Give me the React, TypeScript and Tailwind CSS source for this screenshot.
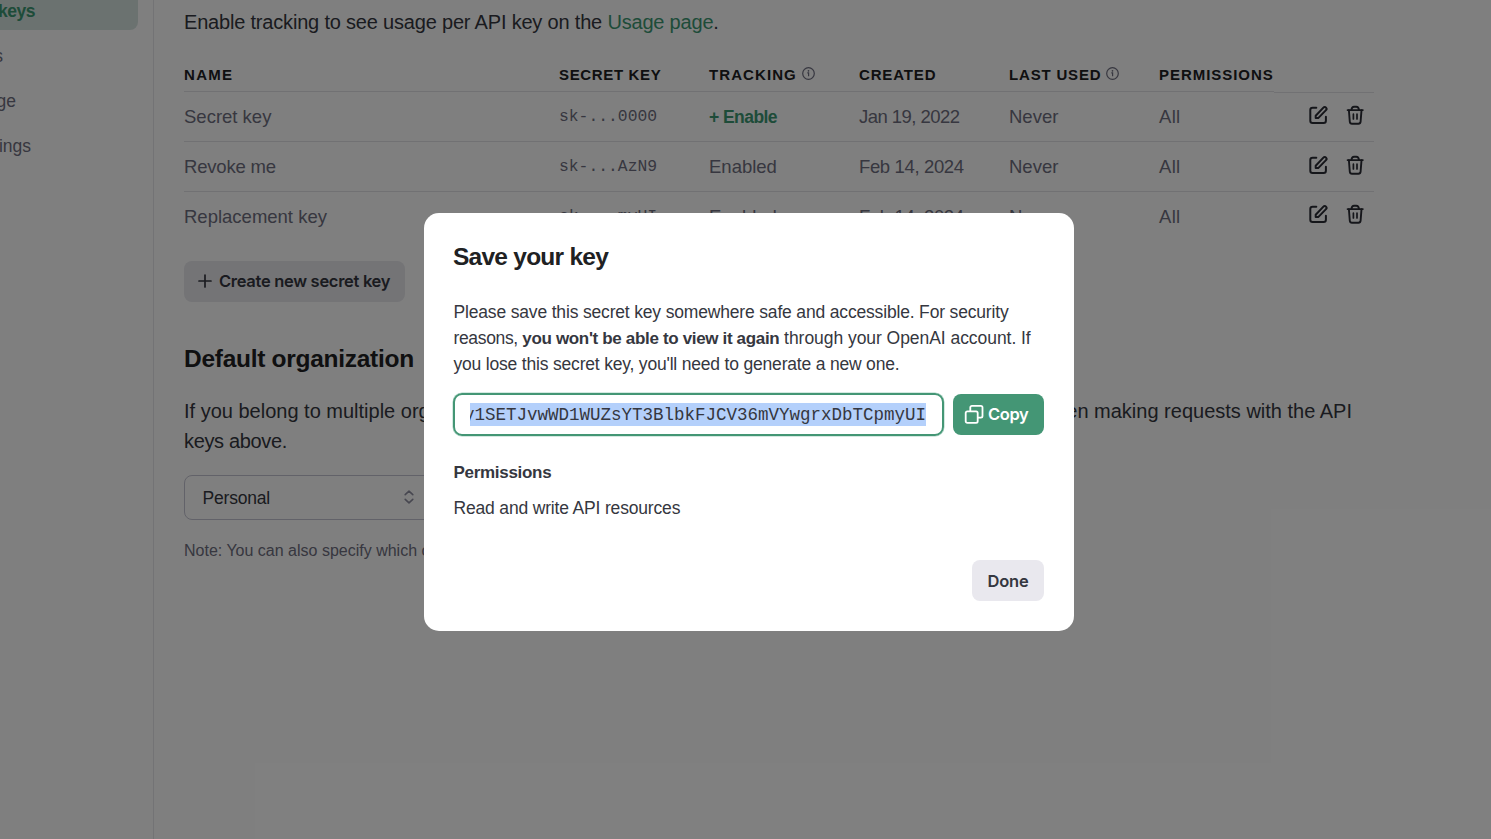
import type { ReactNode } from "react";

function EditIcon() {
  return (
    <svg width="24" height="24" viewBox="0 0 24 24" fill="none" stroke="currentColor" strokeWidth="2" strokeLinecap="round" strokeLinejoin="round">
      <path d="M10.3 5.7H6.6a2.3 2.3 0 0 0-2.3 2.3v10.7a2.3 2.3 0 0 0 2.3 2.3h11a2.3 2.3 0 0 0 2.3-2.3v-4" />
      <path d="M9.7 16.1v-2.3l7.7-8.2a1.8 1.8 0 0 1 2.6 0a1.8 1.8 0 0 1 0 2.5L12.2 16.1z" />
    </svg>
  );
}

function TrashIcon() {
  return (
    <svg width="24" height="24" viewBox="0 0 24 24" fill="none" stroke="currentColor" strokeWidth="1.9" strokeLinecap="round" strokeLinejoin="round">
      <path d="M4.6 8.1h15.2" />
      <path d="M8.4 8c.3-2 1.3-3.2 2.6-3.2h2.4c1.3 0 2.3 1.2 2.6 3.2" />
      <path d="M5.9 8.2l.9 11.5a2.2 2.2 0 0 0 2.2 2h6.4a2.2 2.2 0 0 0 2.2-2l.9-11.5" />
      <path d="M10.4 12.2v4.7M14 12.2v4.7" strokeWidth="1.7" />
    </svg>
  );
}

function InfoIcon() {
  return (
    <svg width="13" height="13" viewBox="0 0 13 13" fill="none" stroke="currentColor">
      <circle cx="6.5" cy="6.5" r="5.8" strokeWidth="1.2" />
      <path d="M5.3 5.8h1.3v3.4" strokeWidth="1.2" />
      <circle cx="6.5" cy="3.8" r=".85" fill="currentColor" stroke="none" />
    </svg>
  );
}

function CopyIcon() {
  return (
    <svg width="20" height="20" viewBox="0 0 20 20" fill="none" stroke="currentColor" strokeWidth="1.8" strokeLinejoin="round">
      <rect x="1.7" y="7.3" width="12" height="11.5" rx="1.6" />
      <path d="M6.3 7V3.4a1.6 1.6 0 0 1 1.6-1.6h9a1.6 1.6 0 0 1 1.6 1.6v8.7a1.6 1.6 0 0 1-1.6 1.6H14" />
    </svg>
  );
}

function SidebarItem({ label, width, active = false }: { label: string; width: string; active?: boolean }) {
  return (
    <div className={active ? "flex h-[37px] w-[138px] items-center rounded-r-[8px] bg-[#d7e5e1]" : "flex h-[37px] w-[138px] items-center"}>
      <span className={`${width} flex shrink-0 justify-end whitespace-nowrap ${active ? "font-bold tracking-[-0.5px] text-[#3c9873]" : "text-[#6e6e80]"}`}>
        {label}
      </span>
    </div>
  );
}

function HeaderCell({ children, info = false }: { children?: ReactNode; info?: boolean }) {
  return (
    <div className="flex h-[34px] gap-[5px] whitespace-nowrap border-b border-[#e2e2e6] pt-[7px] leading-[20px]">
      {children}
      {info && <span className="pt-[2px] text-[#6e6e80]"><InfoIcon /></span>}
    </div>
  );
}

const keys = [
  { name: "Secret key", secret: "sk-...0000", tracked: false, created: "Jan 19, 2022" },
  { name: "Revoke me", secret: "sk-...AzN9", tracked: true, created: "Feb 14, 2024" },
  { name: "Replacement key", secret: "sk-...myUI", tracked: true, created: "Feb 14, 2024" },
];

const columns = "grid grid-cols-[375px_150px_150px_150px_150px_115px_100px]";

export default function App() {
  return (
    <div className="relative h-[839px] w-[1491px] overflow-hidden bg-white font-['Liberation_Sans',Arial,sans-serif] text-[#353740]">
      <div className="flex h-full">
        <aside className="-mt-[7px] flex w-[154px] shrink-0 flex-col gap-[8px] border-r border-[#e6e6ea] text-[17.5px]">
          <SidebarItem label="API keys" width="w-[35px]" active />
          <SidebarItem label="Files" width="w-[3px]" />
          <SidebarItem label="Usage" width="w-[16px]" />
          <SidebarItem label="Settings" width="w-[31px]" />
        </aside>

        <main className="w-[1220px] shrink-0 pl-[30px] pt-[7px]">
          <p className="h-[51px] whitespace-nowrap text-[20px] leading-[30px] tracking-[-0.19px]">
            Enable tracking to see usage per API key on the <span className="text-[#3c9873]">Usage page</span>.
          </p>

          <div className={`${columns} h-[34px] text-[15px] font-bold text-[#202123]`}>
            <HeaderCell><span className="tracking-[1.3px]">NAME</span></HeaderCell>
            <HeaderCell><span className="tracking-[0.65px]">SECRET KEY</span></HeaderCell>
            <HeaderCell info><span className="tracking-[1.08px]">TRACKING</span></HeaderCell>
            <HeaderCell><span className="tracking-[0.85px]">CREATED</span></HeaderCell>
            <HeaderCell info><span className="tracking-[0.82px]">LAST USED</span></HeaderCell>
            <HeaderCell><span className="tracking-[0.95px]">PERMISSIONS</span></HeaderCell>
            <div className="h-[35px] border-b border-[#e2e2e6]" />
          </div>

          {keys.map((k, i) => (
            <div
              key={k.name}
              className={`${columns} items-center whitespace-nowrap text-[18.5px] text-[#6e6e80] ${i < 2 ? "h-[50px] border-b border-[#e2e2e6]" : "h-[49px]"}`}
            >
              <span className={k.name === "Revoke me" ? "tracking-[-0.2px]" : ""}>{k.name}</span>
              <span className="pt-[2px] font-['Liberation_Mono',monospace] text-[16.35px]">{k.secret}</span>
              {k.tracked ? (
                <span>Enabled</span>
              ) : (
                <span className="pt-[2px] text-[17.5px] font-bold tracking-[-0.56px] text-[#3c9873]">+ Enable</span>
              )}
              <span className={k.tracked ? "tracking-[-0.36px]" : "tracking-[-0.55px]"}>{k.created}</span>
              <span>Never</span>
              <span className="tracking-[0.3px]">All</span>
              <span className={`flex gap-[13px] pl-[32px] text-[#2b2c35] ${i < 2 ? "pb-[5px]" : "pb-[7px]"}`}>
                <EditIcon />
                <TrashIcon />
              </span>
            </div>
          ))}

          <button className="mt-[20px] flex h-[41px] w-[221px] items-center gap-[7px] whitespace-nowrap rounded-[8px] bg-[#e8e8ed] pl-[14px] font-['Inter',sans-serif] text-[16.5px] font-semibold tracking-[-0.3px] text-[#353740]">
            <svg width="14" height="14" viewBox="0 0 14 14" stroke="currentColor" strokeWidth="1.7" strokeLinecap="round" className="mb-[1px]">
              <path d="M7 1v12M1 7h12" />
            </svg>
            Create new secret key
          </button>

          <h2 className="mt-[41px] text-[24.5px] font-bold leading-[32px] tracking-[-0.28px] text-[#202123]">Default organization</h2>

          <div className="mt-[21px] text-[20px] leading-[30px]">
            <div className="flex w-[1168px] justify-between whitespace-nowrap">
              <span>If you belong to multiple organizations, this controls which</span>
              <span>is used by default when making requests with the API</span>
            </div>
            <div className="tracking-[-0.34px]">keys above.</div>
          </div>

          <div className="mt-[19px] flex h-[45px] w-[250px] items-center justify-between rounded-[8px] border border-[#c5c5d2] pl-[17.5px] pr-[19px] text-[17.5px] tracking-[-0.2px]">
            <span className="pt-[2px]">Personal</span>
            <svg width="10" height="14" viewBox="0 0 10 14" fill="none" stroke="#8e8ea0" strokeWidth="1.6" strokeLinecap="round" strokeLinejoin="round" className="mb-[2px]">
              <path d="M1.2 4.6L5 1.2l3.8 3.4M1.2 9.4L5 12.8l3.8-3.4" />
            </svg>
          </div>

          <p className="mt-[20px] whitespace-nowrap text-[16px] leading-[22px] text-[#6e6e80]">
            Note: You can also specify which organization to use for each API request.
          </p>
        </main>
      </div>

      <div className="absolute inset-0 flex items-start justify-center bg-black/50 pl-[7px] pt-[213px]">
        <div className="flex h-[418px] w-[650px] flex-col rounded-[15px] bg-white px-[30px] pt-[28px]">
          <h3 className="-ml-px text-[24.5px] font-bold leading-[32px] tracking-[-0.75px] text-[#202123]">Save your key</h3>

          <div className="-ml-[0.5px] mt-[26px] whitespace-nowrap text-[17.5px] leading-[26px]">
            <p className="tracking-[-0.17px]">Please save this secret key somewhere safe and accessible. For security</p>
            <p className="h-[26px] tracking-[-0.05px]">
              <span className="tracking-[-0.35px]">reasons, </span>
              <strong className="text-[17px] font-bold leading-none tracking-[-0.34px]">you won't be able to view it again</strong> through your OpenAI account. If
            </p>
            <p className="tracking-[-0.19px]">you lose this secret key, you'll need to generate a new one.</p>
          </div>

          <div className="-ml-px mt-[16px] flex items-center gap-[9px]">
            <div className="flex h-[43px] w-[491px] items-center rounded-[9px] border-2 border-[#449675] px-[15px] shadow-[0_0_0_0.5px_#a9d3c3]">
              <div className="flex h-[23px] w-[456px] items-center justify-end overflow-hidden whitespace-nowrap bg-[#b4d0fb] font-['Liberation_Mono',monospace] text-[17.5px]">
                <span className="pt-[2px]">y1SETJvwWD1WUZsYT3BlbkFJCV36mVYwgrxDbTCpmyUI</span>
              </div>
            </div>
            <button className="flex h-[41px] w-[91px] items-center gap-[4px] rounded-[8px] bg-[#449675] pl-[11px] font-['Inter',sans-serif] text-[16.5px] font-semibold tracking-[-0.4px] text-white">
              <span className="pb-[2px]"><CopyIcon /></span>
              Copy
            </button>
          </div>

          <h4 className="-ml-[0.5px] mt-[24px] text-[17px] font-bold leading-[26px] tracking-[-0.3px]">Permissions</h4>
          <p className="-ml-[0.5px] mt-[9px] text-[17.5px] leading-[26px] tracking-[-0.17px]">Read and write API resources</p>

          <button className="mt-[39px] h-[41px] w-[72px] self-end rounded-[8px] bg-[#e9e8ee] pt-[1px] font-['Inter',sans-serif] text-[16.5px] font-semibold tracking-[-0.2px]">Done</button>
        </div>
      </div>
    </div>
  );
}
